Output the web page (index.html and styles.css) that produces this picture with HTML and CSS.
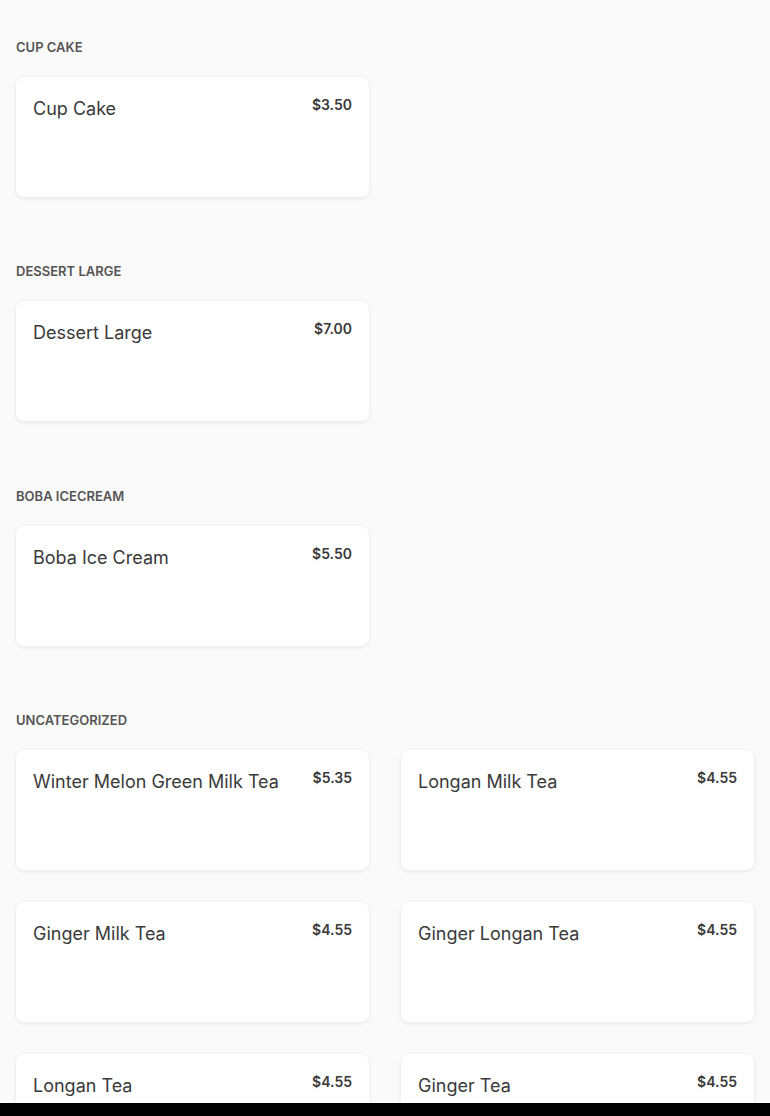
FILE: index.html
```html
<!DOCTYPE html>
<html lang="en">
<head>
    <meta charset="utf-8">
    <title>Menu</title>
    <link rel="stylesheet" href="styles.css">
</head>
<body>

<main class="menu">

    <section class="category">
        <h2 class="category-title">Cup Cake</h2>
        <div class="item-grid">
            <div class="item-card">
                <span class="item-name">Cup Cake</span>
                <span class="item-price">$3.50</span>
            </div>
        </div>
    </section>

    <section class="category">
        <h2 class="category-title">Dessert Large</h2>
        <div class="item-grid">
            <div class="item-card">
                <span class="item-name">Dessert Large</span>
                <span class="item-price">$7.00</span>
            </div>
        </div>
    </section>

    <section class="category">
        <h2 class="category-title">Boba Icecream</h2>
        <div class="item-grid">
            <div class="item-card">
                <span class="item-name">Boba Ice Cream</span>
                <span class="item-price">$5.50</span>
            </div>
        </div>
    </section>

    <section class="category">
        <h2 class="category-title">Uncategorized</h2>
        <div class="item-grid">
            <div class="item-card">
                <span class="item-name">Winter Melon Green Milk Tea</span>
                <span class="item-price">$5.35</span>
            </div>
            <div class="item-card">
                <span class="item-name">Longan Milk Tea</span>
                <span class="item-price">$4.55</span>
            </div>
            <div class="item-card">
                <span class="item-name">Ginger Milk Tea</span>
                <span class="item-price">$4.55</span>
            </div>
            <div class="item-card">
                <span class="item-name">Ginger Longan Tea</span>
                <span class="item-price">$4.55</span>
            </div>
            <div class="item-card">
                <span class="item-name">Longan Tea</span>
                <span class="item-price">$4.55</span>
            </div>
            <div class="item-card">
                <span class="item-name">Ginger Tea</span>
                <span class="item-price">$4.55</span>
            </div>
        </div>
    </section>

</main>

<footer class="bottom-bar"></footer>

</body>
</html>
```
FILE: styles.css
```css
* {
    box-sizing: border-box;
}

body {
    margin: 0;
    background: #fafafa;
    font-family: Inter, "Noto Sans", sans-serif;
    color: #3a3a3a;
}

.menu {
    padding: 39px 16px 40px;
}

.category {
    margin-bottom: 66.4px;
}

.category-title {
    margin: 0 0 21px;
    font-size: 13px;
    line-height: 17px;
    font-weight: 600;
    text-transform: uppercase;
    color: #555;
}

.item-grid {
    display: grid;
    grid-template-columns: 1fr 1fr;
    gap: 32px;
}

.item-card {
    display: flex;
    justify-content: space-between;
    align-items: flex-start;
    min-height: 120px;
    padding: 19px 17px;
    background: #fff;
    border-radius: 8px;
    box-shadow: 0 1px 4px rgba(0, 0, 0, 0.09);
}

.item-name {
    font-size: 18px;
    line-height: 26px;
    color: #3a3a3a;
}

.item-price {
    font-size: 14px;
    line-height: 18px;
    font-weight: 600;
    color: #3a3a3a;
}

.bottom-bar {
    position: fixed;
    left: 0;
    right: 0;
    bottom: 0;
    height: 13px;
    background: #000;
}
```
